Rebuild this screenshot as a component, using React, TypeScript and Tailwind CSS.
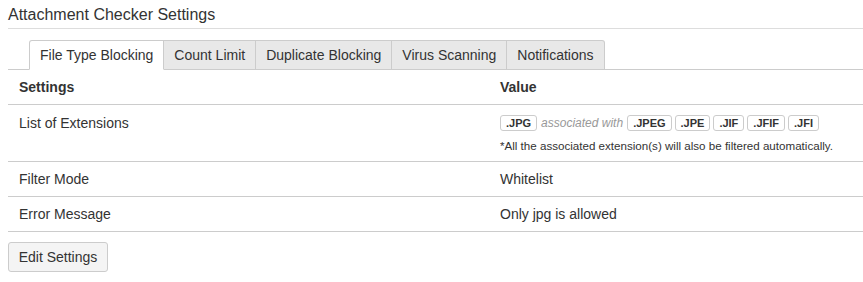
import * as React from "react";

const tabs = [
  "File Type Blocking",
  "Count Limit",
  "Duplicate Blocking",
  "Virus Scanning",
  "Notifications",
];

const associated = [".JPEG", ".JPE", ".JIF", ".JFIF", ".JFI"];

function Badge({ children }: { children: React.ReactNode }) {
  return (
    <span className="inline-flex h-[16px] items-center rounded-[3px] border border-[#ccc] bg-white px-[5px] text-[11px] font-bold leading-none text-[#333]">
      {children}
    </span>
  );
}

export default function App() {
  const [active, setActive] = React.useState(0);

  return (
    <div className="pl-2 text-[14px] text-[#333]" style={{ fontFamily: '"Liberation Sans", Arial, sans-serif' }}>
      <h1 className="border-b border-[#ddd] pt-[5px] pb-[3px] text-[16px] leading-[20px] font-normal">
        Attachment Checker Settings
      </h1>

      <div className="mt-[11px] flex border-b border-[#ccc] pl-[21px]">
        {tabs.map((t, i) => (
          <button
            key={t}
            onClick={() => setActive(i)}
            className={
              "-mb-px h-[30px] border-t border-r border-[#ccc] px-[10px] text-[14px] leading-[20px] " +
              (i === 0 ? "rounded-tl-[3px] border-l " : "") +
              (i === tabs.length - 1 ? "rounded-tr-[3px] " : "") +
              (i === active ? "border-b border-b-white bg-white" : "border-b border-b-[#ccc] bg-[#e8e8e8]")
            }
          >
            {t}
          </button>
        ))}
      </div>

      <div className="grid grid-cols-[481px_1fr]">
        <div className="border-b border-[#ccc] px-[11px] py-[7px] leading-[20px] font-bold">Settings</div>
        <div className="border-b border-[#ccc] px-[11px] py-[7px] leading-[20px] font-bold">Value</div>

        <div className="border-b border-[#ccc] px-[11px] pt-[8px] pb-[8px] leading-[20px]">List of Extensions</div>
        <div className="border-b border-[#ccc] px-[11px] pt-[8px] pb-[8px]">
          <div className="flex h-[20px] items-center gap-[3px]">
            <Badge>.JPG</Badge>
            <span className="px-[1px] text-[12px] italic text-[#999]">associated with</span>
            {associated.map((a) => (
              <Badge key={a}>{a}</Badge>
            ))}
          </div>
          <div className="mt-[5px] text-[11.6px] leading-[15px]">
            *All the associated extension(s) will also be filtered automatically.
          </div>
        </div>

        <div className="border-b border-[#ccc] px-[11px] py-[7px] leading-[20px]">Filter Mode</div>
        <div className="border-b border-[#ccc] px-[11px] py-[7px] leading-[20px]">Whitelist</div>

        <div className="border-b border-[#ccc] px-[11px] py-[7px] leading-[20px]">Error Message</div>
        <div className="border-b border-[#ccc] px-[11px] py-[7px] leading-[20px]">Only jpg is allowed</div>
      </div>

      <button className="mt-[10px] h-[30px] w-[100px] rounded-[3px] border border-[#ccc] bg-[#f4f4f4] text-[14px] leading-[20px] text-[#333]">
        Edit Settings
      </button>
    </div>
  );
}
